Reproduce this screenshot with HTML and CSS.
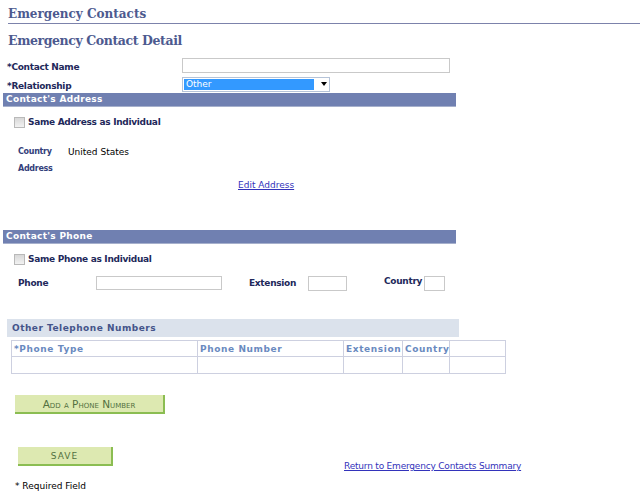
FILE: index.html
```html
<!DOCTYPE html>
<html>
<head>
<title>Emergency Contacts</title>
<link rel="stylesheet" href="styles.css">
</head>
<body>
  <h1 class="page-title">Emergency Contacts</h1>
  <h2 class="sub-title">Emergency Contact Detail</h2>

  <div class="field-row name-row">
    <label class="req-label">*Contact Name</label>
    <input type="text" class="name-input">
  </div>
  <div class="field-row rel-row">
    <label class="req-label">*Relationship</label>
    <div class="fake-select">
      <span class="sel-value">Other</span>
      <span class="sel-arrow"></span>
    </div>
  </div>

  <!-- address group -->
  <div class="group-bar">Contact's Address</div>
  <div class="check-row">
    <span class="checkbox"></span>
    <span class="check-label">Same Address as Individual</span>
  </div>
  <div class="addr-block">
    <div class="addr-line"><span class="small-label">Country</span><span class="addr-value">United States</span></div>
    <div class="addr-line"><span class="small-label">Address</span></div>
  </div>
  <div class="edit-row"><a href="#" class="link">Edit Address</a></div>

  <!-- phone group -->
  <div class="group-bar phone-bar">Contact's Phone</div>
  <div class="check-row">
    <span class="checkbox"></span>
    <span class="check-label">Same Phone as Individual</span>
  </div>
  <div class="phone-row">
    <span class="phone-label">Phone</span>
    <input type="text" class="phone-input">
    <span class="ext-label">Extension</span>
    <input type="text" class="ext-input">
    <span class="country-label">Country</span>
    <input type="text" class="country-input">
  </div>

  <div class="grid-title">Other Telephone Numbers</div>
  <table class="phone-grid">
    <tr>
      <th class="c1">*Phone Type</th>
      <th class="c2">Phone Number</th>
      <th class="c3">Extension</th>
      <th class="c4">Country</th>
      <th class="c5"></th>
    </tr>
    <tr>
      <td></td><td></td><td></td><td></td><td></td>
    </tr>
  </table>

  <div class="add-row"><button class="green-btn add-btn">Add a Phone Number</button></div>

  <div class="save-row">
    <button class="green-btn save-btn">SAVE</button>
    <a href="#" class="link return-link">Return to Emergency Contacts Summary</a>
  </div>
  <div class="req-note">* Required Field</div>
</body>
</html>
```

FILE: styles.css
```css
* {
  box-sizing: border-box;
}
body {
  margin: 0;
  width: 640px;
  font-family: "DejaVu Sans", Verdana, sans-serif;
  font-size: 9px;
  color: #000;
  background: #fff;
}

.page-title {
  margin: 0 0 0 8px;
  padding-top: 7px;
  height: 24px;
  font-family: "DejaVu Serif", Georgia, serif;
  font-size: 12px;
  font-weight: bold;
  color: #4d5a8f;
  border-bottom: 1px solid #7c82ab;
}
.sub-title {
  margin: 9px 0 0 8px;
  height: 23px;
  font-family: "DejaVu Serif", Georgia, serif;
  font-size: 12.5px;
  letter-spacing: -0.4px;
  font-weight: bold;
  color: #4d5a8f;
}

.field-row {
  display: flex;
  align-items: center;
  padding-left: 7px;
}
.name-row {
  height: 16px;
  margin-top: 1px;
}
.rel-row {
  height: 16px;
  margin-top: 3px;
}
.req-label {
  width: 175px;
  font-weight: bold;
  letter-spacing: -0.3px;
  color: #22285a;
  padding-top: 4px;
}
.name-input {
  width: 268px;
  height: 15px;
  border: 1px solid #c9c9c9;
  padding: 0;
}
.fake-select {
  display: flex;
  align-items: center;
  width: 148px;
  height: 15px;
  border: 1px solid #b5c3d8;
  padding: 1px;
}
.sel-value {
  width: 130px;
  height: 100%;
  background: #3399ff;
  color: #fff;
  padding-left: 2px;
  line-height: 11px;
}
.sel-arrow {
  margin-left: 7px;
  width: 0;
  height: 0;
  border-left: 3px solid transparent;
  border-right: 3px solid transparent;
  border-top: 4px solid #000;
}

.group-bar {
  margin: 1px 0 0 3px;
  width: 453px;
  height: 14px;
  background: #7080b1;
  border-bottom: 1px solid #a6b0cc;
  color: #fff;
  font-weight: bold;
  letter-spacing: 0.3px;
  padding-left: 3px;
  line-height: 13px;
}
.phone-bar {
  margin-top: 36px;
}

.check-row {
  display: flex;
  align-items: center;
  padding-left: 14px;
  margin-top: 9px;
  height: 12px;
}
.checkbox {
  width: 11px;
  height: 11px;
  border: 1px solid #b9b9b9;
  background: linear-gradient(#d8d8d8, #f2f2f2);
  margin-right: 3px;
}
.check-label {
  font-weight: bold;
  letter-spacing: -0.3px;
  color: #22285a;
}

.addr-block {
  margin-top: 15px;
  padding-left: 18px;
}
.addr-line {
  display: flex;
  align-items: center;
  height: 17px;
}
.small-label {
  width: 50px;
  font-size: 8px;
  font-weight: bold;
  letter-spacing: -0.3px;
  color: #33407a;
}
.addr-value {
  color: #000;
}
.edit-row {
  padding-left: 238px;
  height: 17px;
  line-height: 17px;
}
.link {
  color: #3333bb;
  text-decoration: underline;
}

.phone-row {
  display: flex;
  align-items: center;
  margin-top: 10px;
  padding-left: 18px;
  height: 16px;
}
.phone-label,
.ext-label,
.country-label {
  font-weight: bold;
  letter-spacing: -0.3px;
  color: #22285a;
}
.phone-label {
  width: 78px;
}
.phone-input {
  width: 126px;
  height: 14px;
  padding: 0;
  border: 1px solid #c9c9c9;
}
.ext-label {
  margin-left: 27px;
  width: 59px;
}
.ext-input {
  width: 39px;
  height: 15px;
  padding: 0;
  border: 1px solid #c9c9c9;
}
.country-label {
  margin-left: 37px;
  width: 40px;
  padding-bottom: 4px;
}
.country-input {
  width: 21px;
  height: 15px;
  padding: 0;
  border: 1px solid #c9c9c9;
}

.grid-title {
  margin: 28px 0 0 7px;
  width: 452px;
  height: 18px;
  background: #dbe2ec;
  color: #44548a;
  font-weight: bold;
  letter-spacing: 0.5px;
  padding-left: 5px;
  line-height: 18px;
}
.phone-grid {
  margin: 3px 0 0 11px;
  border-collapse: collapse;
  table-layout: fixed;
  width: 495px;
}
.phone-grid th,
.phone-grid td {
  border: 1px solid #cdd0e0;
  padding: 0 1px 0 2px;
}
.phone-grid th {
  height: 16px;
  text-align: left;
  color: #6a8abf;
  font-weight: bold;
  letter-spacing: 0.6px;
  white-space: nowrap;
  overflow: hidden;
}
.phone-grid td {
  height: 17px;
}
.c1 { width: 186px; }
.c2 { width: 146px; }
.c3 { width: 59px; }
.c4 { width: 47px; }

.green-btn {
  background: #dde9b1;
  border: none;
  border-right: 2px solid #8bbd52;
  border-bottom: 2px solid #8bbd52;
  color: #527040;
  font-family: "DejaVu Sans", Verdana, sans-serif;
  font-size: 9px;
  padding: 0;
  height: 19px;
}
.add-row {
  margin-top: 21px;
  padding-left: 15px;
}
.add-btn {
  width: 150px;
  font-variant: small-caps;
  font-size: 10.5px;
}
.save-row {
  display: flex;
  align-items: flex-start;
  margin-top: 33px;
  padding-left: 18px;
}
.save-btn {
  width: 95px;
  letter-spacing: 1px;
}
.return-link {
  margin-left: 231px;
  margin-top: 14px;
  letter-spacing: -0.2px;
}
.req-note {
  margin-top: 10px;
  padding-left: 15px;
}
```
